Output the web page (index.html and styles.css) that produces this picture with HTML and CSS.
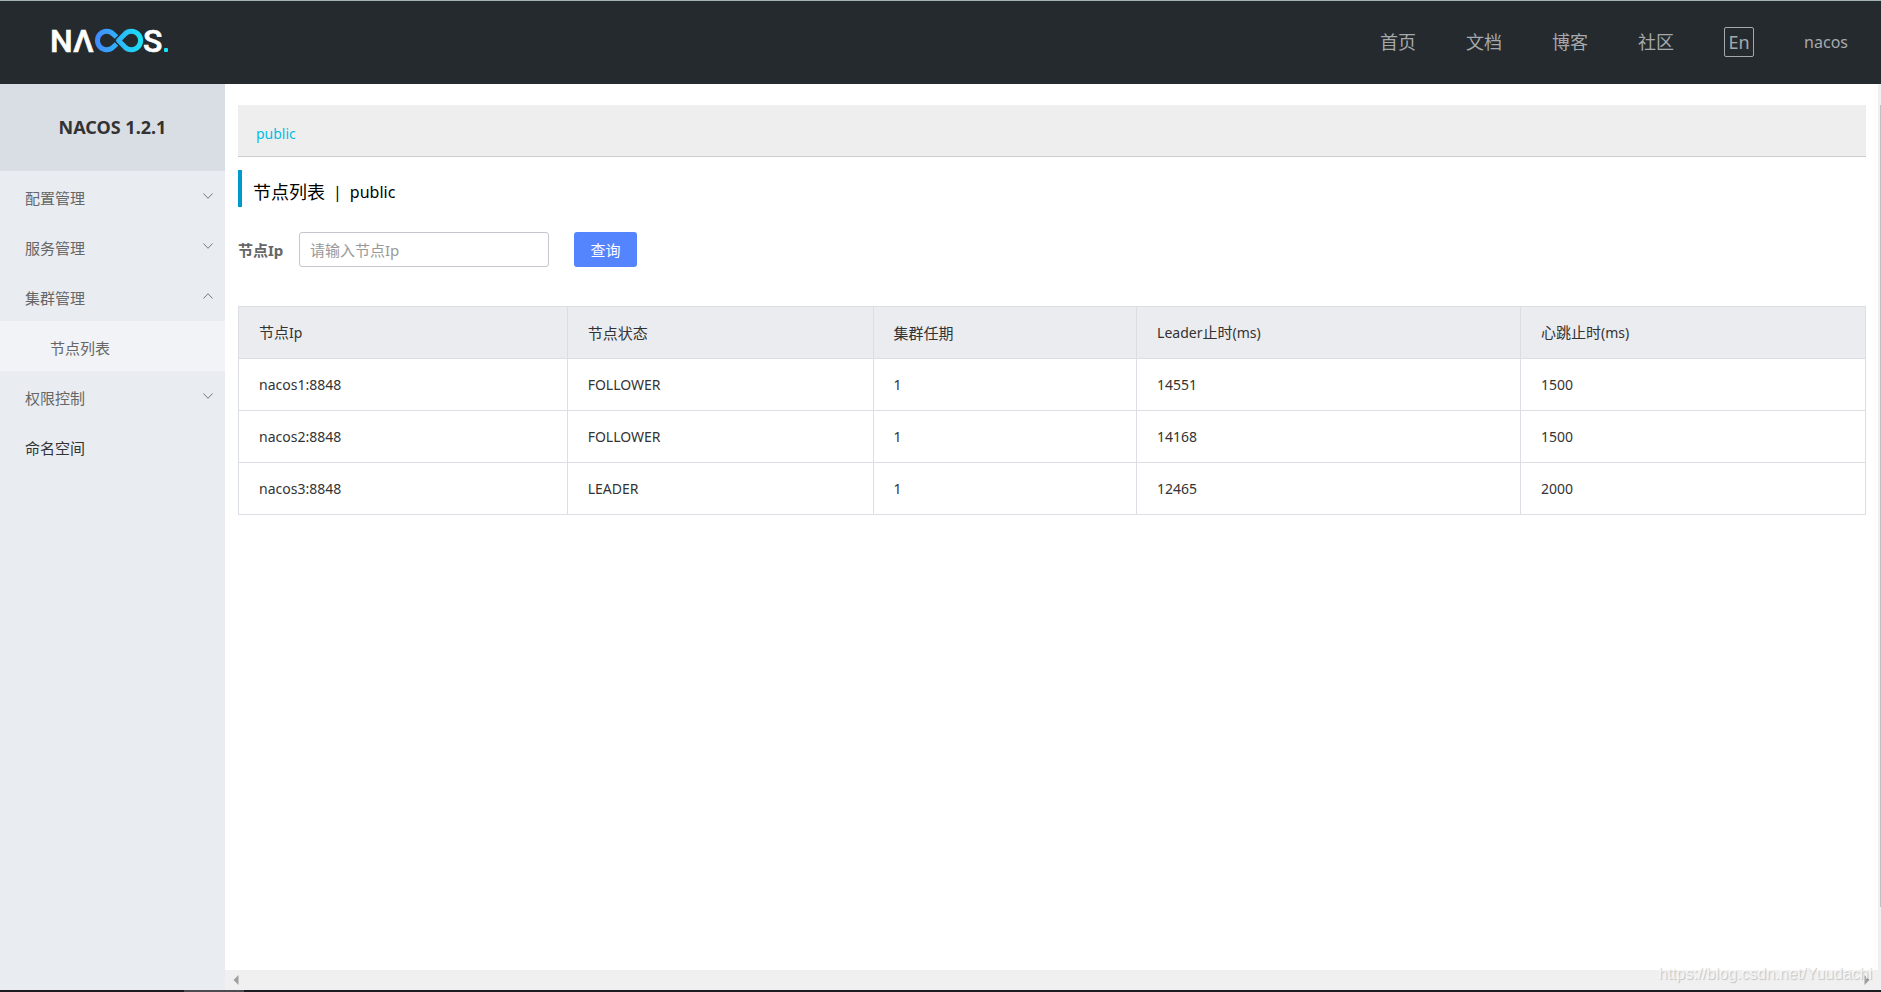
FILE: index.html
```html
<!DOCTYPE html>
<html lang="zh-CN">
<head>
<meta charset="utf-8">
<title>Nacos</title>
<link rel="stylesheet" href="styles.css">
</head>
<body>
<header class="header">
  <a class="logo" href="#" aria-label="Nacos">
    <svg width="124" height="48" viewBox="-4 -10 124 48">
      <defs>
        <linearGradient id="loop" gradientUnits="userSpaceOnUse" x1="43" y1="0" x2="91" y2="0">
          <stop offset="0" stop-color="#4488fe"/>
          <stop offset="1" stop-color="#18e4f6"/>
        </linearGradient>
      </defs>
      <text class="logo-text" x="-2" y="24">N</text>
      <text class="logo-text" x="21" y="24">Λ</text>
      <g fill="none" stroke="url(#loop)" stroke-width="5">
        <path d="M64.500 9 L61 5.800 A9.200 9.200 0 1 0 61 19.200 L64.500 16"/>
        <path d="M66.500 12.500 L73 5.900 A9.200 9.200 0 1 1 73 19.100 Z" stroke-linejoin="round"/>
      </g>
      <text class="logo-text" x="91" y="24">S</text>
      <rect x="112" y="20" width="4" height="4" rx="1" fill="#18e4f6"/>
    </svg>
  </a>
  <nav class="nav">
    <a href="#">首页</a>
    <a href="#">文档</a>
    <a href="#">博客</a>
    <a href="#">社区</a>
    <button class="lang" type="button">En</button>
    <a class="user" href="#">nacos</a>
  </nav>
</header>
<div class="body">
  <aside class="sidebar">
    <h1 class="product">NACOS 1.2.1</h1>
    <nav class="menu">
      <a class="item" href="#">配置管理<svg class="arrow" viewBox="0 0 10 6"><path d="M0.500 0.500 L5 5.300 L9.500 0.500"/></svg></a>
      <a class="item" href="#">服务管理<svg class="arrow" viewBox="0 0 10 6"><path d="M0.500 0.500 L5 5.300 L9.500 0.500"/></svg></a>
      <a class="item" href="#">集群管理<svg class="arrow" viewBox="0 0 10 6"><path d="M0.500 5.500 L5 0.700 L9.500 5.500"/></svg></a>
      <a class="item sub" href="#">节点列表</a>
      <a class="item" href="#">权限控制<svg class="arrow" viewBox="0 0 10 6"><path d="M0.500 0.500 L5 5.300 L9.500 0.500"/></svg></a>
      <a class="item leaf" href="#">命名空间</a>
    </nav>
  </aside>
  <div class="view">
    <main class="main">
      <div class="namespaces"><a href="#">public</a></div>
      <h2 class="title">节点列表<span class="bar">|</span><span class="title-ns">public</span></h2>
      <form class="search">
        <label for="ip">节点Ip</label>
        <input id="ip" type="text" placeholder="请输入节点Ip">
        <button type="button">查询</button>
      </form>
      <table class="nodes">
        <colgroup><col class="c-ip"><col class="c-state"><col class="c-term"><col class="c-leader"><col></colgroup>
        <thead>
          <tr><th>节点<span class="latin">Ip</span></th><th>节点状态</th><th>集群任期</th><th><span class="latin">Leader</span>止时<span class="latin">(ms)</span></th><th>心跳止时<span class="latin">(ms)</span></th></tr>
        </thead>
        <tbody>
          <tr><td>nacos1:8848</td><td>FOLLOWER</td><td>1</td><td>14551</td><td>1500</td></tr>
          <tr><td>nacos2:8848</td><td>FOLLOWER</td><td>1</td><td>14168</td><td>1500</td></tr>
          <tr><td>nacos3:8848</td><td>LEADER</td><td>1</td><td>12465</td><td>2000</td></tr>
        </tbody>
      </table>
    </main>
    <div class="hscroll">
      <svg width="6" height="10" viewBox="0 0 6 10"><path d="M5.500 0 V10 L0.500 5 Z"/></svg>
      <svg width="6" height="10" viewBox="0 0 6 10"><path d="M0.500 0 V10 L5.500 5 Z"/></svg>
    </div>
  </div>
  <div class="vscroll"><div class="vthumb"></div></div>
</div>
<footer class="edge"><div class="edge-light"></div></footer>
<div class="watermark">https://blog.csdn.net/Yuudachi</div>
</body>
</html>
```
FILE: styles.css
```css
* { box-sizing: border-box; }
body {
  margin: 0;
  min-height: 100vh;
  display: flex;
  flex-direction: column;
  position: relative;
  font: 14px/20px "Noto Sans", "Noto Sans CJK SC", sans-serif;
  color: #333;
  background: #fff;
}
a { color: inherit; text-decoration: none; }
.latin { font-size: 14px; }

.header {
  height: 84px;
  display: flex;
  align-items: center;
  justify-content: space-between;
  padding: 0 33px 2px 48px;
  background: #252a2f;
  border-top: 1px solid #a3b3b3;
}
.logo { display: flex; }
.logo-text { font: 500 32px Roboto, sans-serif; fill: #fff; stroke: #fff; stroke-width: 0.6px; }
.nav {
  display: flex;
  align-items: center;
  gap: 50px;
  font-size: 18px;
  line-height: 24px;
  color: #a6a9ab;
}
.lang {
  width: 30px;
  height: 30px;
  padding: 0;
  border: 1px solid #a6a9ab;
  border-radius: 2px;
  background: none;
  color: inherit;
  font: 18px/24px "Noto Sans", sans-serif;
}
.user { font-size: 16px; }

.body { flex: 1; display: flex; }
.sidebar { width: 225px; flex: none; background: #e9edf2; }
.product {
  margin: 0;
  padding: 31px 0 32px;
  background: #d9dde4;
  font-size: 18px;
  line-height: 24px;
  text-align: center;
}
.menu { display: flex; flex-direction: column; }
.item {
  height: 50px;
  display: flex;
  align-items: center;
  justify-content: space-between;
  padding: 4px 12px 0 25px;
  font-size: 15px;
  color: #666;
}
.sub { padding-left: 50px; background: #f1f3f7; }
.leaf { color: #333; }
.arrow { width: 10px; height: 6px; margin-bottom: 4px; fill: none; stroke: #777; }

.view { flex: 1; min-width: 0; display: flex; flex-direction: column; }
.main { flex: 1; padding: 21px 12px 0 13px; }
.namespaces {
  padding: 19px 18px 12px;
  background: #eee;
  border-bottom: 1px solid #ccc;
  color: #00bfe5;
}
.title {
  display: flex;
  align-items: center;
  margin: 13px 0 25px;
  padding: 7px 0 0 11px;
  border-left: 4px solid #09c;
  font-size: 18px;
  font-weight: 400;
  line-height: 30px;
  color: #000;
}
.bar { margin: 0 8px; font-size: 16px; }
.title-ns { font-size: 16px; }
.search { display: flex; align-items: center; margin-bottom: 39px; }
.search label { width: 61px; font-size: 15px; font-weight: 700; color: #666; }
.search input {
  width: 250px;
  height: 35px;
  padding: 0 10px;
  border: 1px solid #c4c6cf;
  border-radius: 3px;
  font: inherit;
  font-size: 15px;
}
.search input::placeholder { color: #999; }
.search button {
  width: 63px;
  height: 35px;
  margin-left: 25px;
  padding: 0;
  border: 0;
  border-radius: 3px;
  background: #5584ff;
  color: #fff;
  font: inherit;
  font-size: 15px;
}
.nodes { width: 100%; table-layout: fixed; border-collapse: collapse; }
.nodes th, .nodes td {
  height: 52px;
  padding: 0 20px;
  border: 1px solid #dcdee3;
  text-align: left;
}
.nodes th { background: #ebecf0; font-size: 15px; font-weight: 400; }
.c-ip { width: 20.2%; }
.c-state { width: 18.8%; }
.c-term { width: 16.2%; }
.c-leader { width: 23.6%; }

.hscroll {
  height: 20px;
  display: flex;
  align-items: center;
  justify-content: space-between;
  padding: 0 8px;
  background: #f0f0f0;
  fill: #a0a0a0;
}
.vscroll { width: 3px; padding: 21px 0 83px 2px; display: flex; background: #f0f0f0; }
.vthumb { flex: 1; background: #c1c1c1; }
.edge { height: 2px; padding-left: 184px; background: #1b1b20; }
.edge-light { width: 60px; height: 2px; background: #4c4c50; }
.watermark {
  position: absolute;
  right: 9px;
  bottom: 8px;
  font: 16px/20px "Liberation Sans", Arial, sans-serif;
  color: rgba(255, 255, 255, 0.7);
  text-shadow: 1px 1px 1px rgba(0, 0, 0, 0.2);
}
```
